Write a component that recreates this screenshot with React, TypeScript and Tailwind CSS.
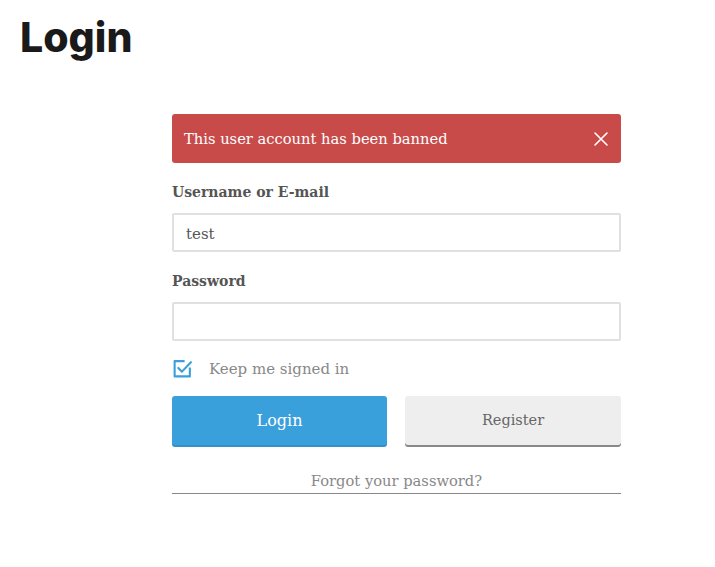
import React from "react";

export default function App() {
  const serif = { fontFamily: '"DejaVu Serif", "Liberation Serif", serif' };
  return (
    <div className="min-h-[567px] w-[715px] bg-white">
      <h1
        className="pl-[20px] pt-[15px] text-[41px] font-extrabold leading-[44px] text-[#1a1a1a]"
        style={{ fontFamily: 'Inter, "Open Sans", sans-serif' }}
      >
        Login
      </h1>
      <div className="ml-[172px] mt-[55px] w-[449px] text-[15px]" style={serif}>
        <div className="flex h-[49px] items-center justify-between rounded-[3px] bg-[#c84b4a] pl-[12px] pr-[12px] text-white">
          <span className="pt-[1px] text-[14.7px]">This user account has been banned</span>
          <svg width="16" height="16" viewBox="0 0 16 16" fill="none" stroke="white" strokeWidth="1.6" strokeLinecap="round">
            <path d="M2 2 L14 14 M14 2 L2 14" />
          </svg>
        </div>
        <div className="mt-[19px] text-[14px] font-bold text-[#555]">Username or E-mail</div>
        <div className="mt-[10px] flex h-[39px] items-center rounded-[2px] border-2 border-[#e0e0e0] px-[12px] pt-[3px] text-[15px] text-[#555]">
          test
        </div>
        <div className="mt-[19px] text-[14px] font-bold text-[#555]">Password</div>
        <div className="mt-[10px] h-[39px] rounded-[2px] border-2 border-[#e0e0e0]" />
        <div className="mt-[16px] flex items-center gap-[16px] text-[15px] text-[#888]">
          <svg width="21" height="21" viewBox="0 0 20 20" fill="none" stroke="#3a9fdb" strokeWidth="2">
            <path d="M17 9 V17.5 H2.5 V3 H12" strokeLinejoin="round" />
            <path d="M6 9.5 L9.5 13 L18 4" strokeLinecap="round" strokeLinejoin="round" />
          </svg>
          <span className="pt-[1px]">Keep me signed in</span>
        </div>
        <div className="mt-[15px] flex gap-[18px]">
          <button className="h-[49px] w-[215px] rounded-[3px] bg-[#3aa0db] pt-[2px] text-[16px] text-white shadow-[0_2px_0_#3490c8]">
            Login
          </button>
          <button className="h-[49px] flex-1 rounded-[3px] bg-[#eeeeee] pt-[2px] text-[14.5px] text-[#666] shadow-[0_2px_0_#888]">
            Register
          </button>
        </div>
        <div className="mt-[25px] border-b border-[#888] pb-[1px] text-center text-[14.7px] text-[#888]">
          Forgot your password?
        </div>
      </div>
    </div>
  );
}
